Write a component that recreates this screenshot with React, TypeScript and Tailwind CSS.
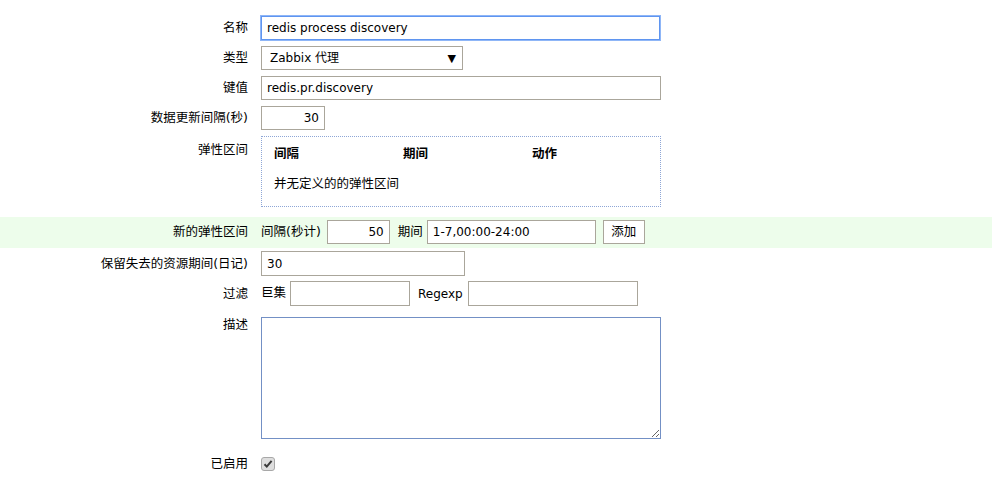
import React from "react";

const font = { fontFamily: '"DejaVu Sans", "Noto Sans CJK SC", sans-serif' };

function Label({ children, className = "" }: { children: React.ReactNode; className?: string }) {
  return (
    <div className={"w-[248px] shrink-0 text-right whitespace-nowrap text-[12.5px] " + className}>{children}</div>
  );
}

const inputCls =
  "h-[24px] border border-[#aaa69b] bg-white px-[5px] text-[12px] text-black outline-none";

export default function App() {
  return (
    <div className="w-[992px] h-[483px] bg-white text-[12px] text-black overflow-hidden" style={font}>
      <div className="flex flex-col pt-[16px]">
        {/* 名称 */}
        <div className="flex items-center gap-[13px]">
          <Label className="leading-[24px]">名称</Label>
          <input
            readOnly
            defaultValue="redis process discovery"
            className="h-[24px] w-[399px] border border-[#5f95f0] bg-white px-[5px] text-[12px] text-black outline outline-1 outline-[#8fb6f7]"
            style={font}
          />
        </div>
        {/* 类型 */}
        <div className="mt-[6px] flex items-center gap-[13px]">
          <Label className="leading-[24px]">类型</Label>
          <div className="flex h-[24px] w-[202px] items-center justify-between border border-[#aaa69b] bg-white pl-[8px] pr-[6px]">
            <span>Zabbix 代理</span>
            <span className="text-[11px] leading-none">▼</span>
          </div>
        </div>
        {/* 键值 */}
        <div className="mt-[6px] flex items-center gap-[13px]">
          <Label className="leading-[24px]">键值</Label>
          <input readOnly defaultValue="redis.pr.discovery" className={inputCls + " w-[400px]"} style={font} />
        </div>
        {/* 数据更新间隔 */}
        <div className="mt-[6px] flex items-center gap-[13px]">
          <Label className="leading-[24px]">数据更新间隔(秒)</Label>
          <input readOnly defaultValue="30" className={inputCls + " w-[64px] text-right"} style={font} />
        </div>
        {/* 弹性区间 */}
        <div className="mt-[6px] flex items-start gap-[13px]">
          <Label className="pt-[2px] leading-[24px]">弹性区间</Label>
          <div className="h-[71px] w-[400px] border border-dotted border-[#8ea6d6] pl-[12px] pt-[9px] text-[12.5px]">
            <div className="flex font-bold leading-[16px]">
              <div className="w-[129px]">间隔</div>
              <div className="w-[129px]">期间</div>
              <div>动作</div>
            </div>
            <div className="mt-[14px] leading-[16px]">并无定义的的弹性区间</div>
          </div>
        </div>
        {/* 新的弹性区间 */}
        <div className="mt-[10px] flex h-[31px] items-start gap-[13px] bg-[#edfdeb] pt-[3px]">
          <Label className="leading-[24px]">新的弹性区间</Label>
          <div className="flex items-center">
            <span className="leading-[24px] text-[12.5px]">间隔(秒计)</span>
            <input readOnly defaultValue="50" className={inputCls + " ml-[6px] w-[63px] text-right"} style={font} />
            <span className="ml-[8px] leading-[24px] text-[12.5px]">期间</span>
            <input readOnly defaultValue="1-7,00:00-24:00" className={inputCls + " ml-[4px] w-[169px]"} style={font} />
            <button className="ml-[7px] h-[24px] w-[42px] border border-[#aaa69b] bg-white text-[12.5px] text-black" style={font}>
              添加
            </button>
          </div>
        </div>
        {/* 保留失去的资源期间 */}
        <div className="mt-[3px] flex items-center gap-[13px]">
          <Label className="leading-[25px]">保留失去的资源期间(日记)</Label>
          <input readOnly defaultValue="30" className={inputCls + " h-[25px] w-[204px]"} style={font} />
        </div>
        {/* 过滤 */}
        <div className="mt-[5px] flex items-center gap-[13px]">
          <Label className="leading-[25px]">过滤</Label>
          <div className="flex items-center">
            <span className="text-[12.5px]">巨集</span>
            <input readOnly defaultValue="" className={inputCls + " ml-[4px] h-[25px] w-[120px]"} style={font} />
            <span className="ml-[8px]">Regexp</span>
            <input readOnly defaultValue="" className={inputCls + " ml-[5px] h-[25px] w-[170px]"} style={font} />
          </div>
        </div>
        {/* 描述 */}
        <div className="mt-[11px] flex items-start gap-[13px]">
          <Label className="leading-[16px]">描述</Label>
          <textarea
            readOnly
            className="h-[122px] w-[400px] border border-[#7390c5] bg-white text-[12px] outline-none"
            style={font}
          />
        </div>
        {/* 已启用 */}
        <div className="mt-[17px] flex items-center gap-[13px]">
          <Label className="leading-[16px]">已启用</Label>
          <div className="flex h-[14px] w-[14px] items-center justify-center rounded-[3px] border border-[#a8a8a8] bg-[#dedede]">
            <svg width="10" height="10" viewBox="0 0 10 10">
              <path d="M1.5 5.2 L3.8 7.6 L8.6 1.8" fill="none" stroke="#3a3a3a" strokeWidth="2" />
            </svg>
          </div>
        </div>
      </div>
    </div>
  );
}
